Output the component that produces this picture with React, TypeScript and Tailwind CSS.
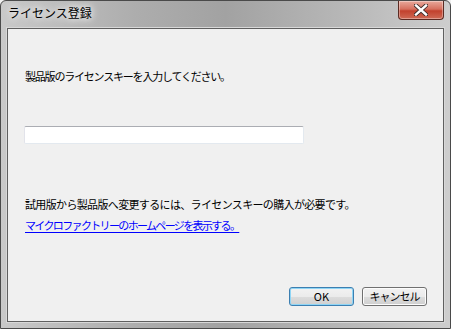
export default function App() {
  const jp = "font-['Noto_Sans_CJK_JP','Noto_Sans',sans-serif]";

  return (
    <div className="w-[451px] h-[329px] bg-[#f0f0f0]">
      <div className="flex h-full w-full flex-col rounded-t-[6px] border border-[#4a4a4a] bg-[linear-gradient(90deg,#c9c9c9,#adadad_30%,#a2a2a2_50%,#b6b6b6_75%,#cdcdcd)]">
        {/* title bar */}
        <div className="flex h-[27px] shrink-0 items-start justify-between">
          <div className={`${jp} pl-[7px] pt-[5px] text-[12px] leading-[14px] text-black [text-shadow:0_0_6px_#fff,0_0_10px_#fff]`}>
            ライセンス登録
          </div>
          <div className="mr-[6px] flex h-[19px] w-[46px] items-center justify-center rounded-b-[4px] border border-t-0 border-[#5b2a22] bg-[linear-gradient(180deg,#e9a99c,#d6705f_45%,#c2412d_55%,#cf6a55)] shadow-[inset_0_0_0_1px_rgba(255,255,255,0.35)]">
            <svg width="14" height="12" viewBox="0 0 14 12">
              <path d="M2 1.5 L12 10.5 M12 1.5 L2 10.5" stroke="#3b2a28" strokeWidth="4.2" strokeLinecap="square" />
              <path d="M2 1.5 L12 10.5 M12 1.5 L2 10.5" stroke="#ffffff" strokeWidth="2.4" strokeLinecap="square" />
            </svg>
          </div>
        </div>

        {/* client area */}
        <div className="mx-[6px] mb-[6px] flex flex-1 flex-col border border-[#5f5f5f] bg-[#f0f0f0] shadow-[0_0_0_1px_#d8d8d8]">
          <div className={`${jp} ml-[17px] mt-[39px] text-[11px] leading-[16px] tracking-[-1.2px] text-black`}>
            製品版のライセンスキーを入力してください。
          </div>
          <div className="ml-[16px] mt-[42px] h-[18px] w-[280px] rounded-[2px] border border-[#abadb3] border-r-[#e3e9ef] border-b-[#e3e9ef] border-l-[#e2e3ea] bg-white" />
          <div className={`${jp} ml-[17px] mt-[52px] text-[11px] leading-[16px] tracking-[-0.65px] text-black`}>
            試用版から製品版へ変更するには、ライセンスキーの購入が必要です。
          </div>
          <div className={`${jp} ml-[17px] mt-[5px] text-[11px] leading-[16px] tracking-[-1.65px] text-[#0000ff] underline underline-offset-[2px]`}>
            マイクロファクトリーのホームページを表示する。
          </div>
          <div className="mt-auto mb-[15px] mr-[16px] flex justify-end gap-[8px]">
            <div className={`${jp} flex h-[19px] w-[65px] items-center justify-center rounded-[3px] border border-[#3c7fb1] bg-[linear-gradient(180deg,#f2f2f2,#ebebeb_50%,#dddddd_50%,#cfcfcf)] text-[11px] text-black shadow-[inset_0_0_0_1px_#8fd5f5]`}>
              OK
            </div>
            <div className={`${jp} flex h-[19px] w-[65px] items-center justify-center rounded-[3px] border border-[#707070] bg-[linear-gradient(180deg,#f2f2f2,#ebebeb_50%,#dddddd_50%,#cfcfcf)] text-[11px] tracking-[-1px] text-black shadow-[inset_0_0_0_1px_#fcfcfc]`}>
              キャンセル
            </div>
          </div>
        </div>
      </div>
    </div>
  );
}
